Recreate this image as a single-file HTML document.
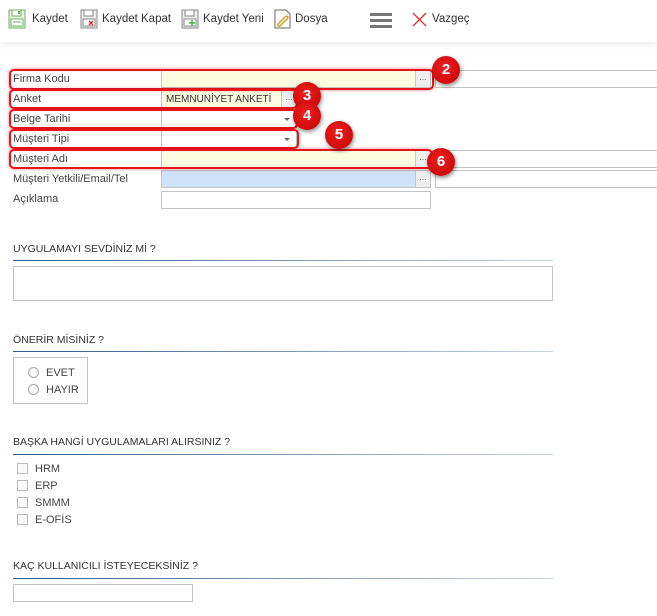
<!DOCTYPE html>
<html><head><meta charset="utf-8"><style>
*{box-sizing:border-box;margin:0;padding:0}
body{width:657px;height:616px;background:#fff;font-family:"Liberation Sans",sans-serif;font-size:11px;color:#333;position:relative;overflow:hidden}
.a{position:absolute}
.tb{left:0;top:0;width:657px;height:42px;background:#fff;box-shadow:0 3px 6px rgba(0,0,0,0.07)}
.tbt{top:13px;font-size:11.5px;color:#333}
.lbl{left:13px;font-size:11px;color:#444}
.inp{border:1px solid #c3c3c3;background:#fff;height:18px}
.btn{border-left:1px solid #c8c8c8;background:#eee;width:15px;height:16px;top:0;right:0;color:#777;font-size:9px;text-align:center;line-height:12px;position:absolute}
.red{border:2px solid #e8141b;border-radius:5px;box-shadow:0 0 3px rgba(200,0,0,0.5)}
.badge{width:28px;height:28px;border-radius:50%;background:radial-gradient(circle at 45% 40%,#f02020,#c00000);color:#fff;font-weight:bold;font-size:15px;text-align:center;line-height:28px;box-shadow:1px 2px 4px rgba(0,0,0,0.45)}
.h{left:13px;font-size:10.5px;color:#333}
.ln{left:13px;width:540px;height:1px;background:linear-gradient(to right,#2e5a84,#c8d4e0)}
.cb{left:17px;width:11px;height:11px;border:1px solid #bbb;background:#fafafa}
.cbl{left:35px;font-size:11px;color:#444}
.rd{left:28px;width:11px;height:11px;border:1px solid #aaa;border-radius:50%;background:#f8f8f8}
.arr{position:absolute;right:6px;top:7px;width:0;height:0;border-left:3px solid transparent;border-right:3px solid transparent;border-top:3px solid #666}
</style></head><body>
<div class="a tb"></div>
<svg class="a" style="left:8px;top:9px" width="18" height="20" viewBox="0 0 18 20"><rect x="1" y="1" width="16" height="18" fill="#e6f3e2" stroke="#6fb069"/><rect x="4" y="1" width="9" height="6" fill="#fff" stroke="#6fb069"/><rect x="10" y="2" width="2" height="3" fill="#6fb069"/><rect x="3" y="10" width="12" height="7" fill="#fff" stroke="#6fb069"/><line x1="5" y1="13" x2="13" y2="13" stroke="#6fb069"/></svg>
<div class="a tbt" style="left:32px">Kaydet</div>
<svg class="a" style="left:80px;top:9px" width="18" height="20" viewBox="0 0 18 20"><rect x="1" y="1" width="16" height="18" fill="#eee" stroke="#888"/><rect x="4" y="1" width="9" height="6" fill="#fff" stroke="#888"/><rect x="3" y="10" width="12" height="7" fill="#fff" stroke="#888"/><path d="M9 12l4 4M13 12l-4 4" stroke="#d22" stroke-width="1.3"/></svg>
<div class="a tbt" style="left:102px">Kaydet Kapat</div>
<svg class="a" style="left:181px;top:9px" width="18" height="20" viewBox="0 0 18 20"><rect x="1" y="1" width="16" height="18" fill="#eee" stroke="#888"/><rect x="4" y="1" width="9" height="6" fill="#fff" stroke="#888"/><rect x="3" y="10" width="12" height="7" fill="#fff" stroke="#888"/><path d="M11 11v6M8 14h6" stroke="#3a3" stroke-width="1.3"/></svg>
<div class="a tbt" style="left:203px">Kaydet Yeni</div>
<svg class="a" style="left:274px;top:9px" width="17" height="20" viewBox="0 0 17 20"><path d="M1 1h11l4 4v14H1z" fill="#fff" stroke="#666"/><path d="M4 15l7-7c2-2 4 0 2 2l-7 7c-1 1-3-1-2-2" fill="none" stroke="#d9a020" stroke-width="1.5"/></svg>
<div class="a tbt" style="left:295px">Dosya</div>
<div class="a" style="left:370px;top:13px;width:22px;height:3px;background:#777"></div>
<div class="a" style="left:370px;top:19px;width:22px;height:3px;background:#777"></div>
<div class="a" style="left:370px;top:25px;width:22px;height:3px;background:#777"></div>
<svg class="a" style="left:412px;top:12px" width="15" height="15"><path d="M1 1l13 13M14 1L1 14" stroke="#e03030" stroke-width="1.3"/></svg>
<div class="a tbt" style="left:432px">Vazgeç</div>

<div class="a lbl" style="top:73px">Firma Kodu</div>
<div class="a inp" style="left:161px;top:70px;width:270px;background:#fbfbe0"><div class="btn">...</div></div>
<div class="a inp" style="left:435px;top:70px;width:230px"></div>

<div class="a lbl" style="top:93px">Anket</div>
<div class="a inp" style="left:161px;top:90px;width:136px;background:#fbfbe0;font-size:10px;padding:3px 4px;color:#333">MEMNUNİYET ANKETİ<div class="btn" style="background:#eee">...</div></div>

<div class="a lbl" style="top:113px">Belge Tarihi</div>
<div class="a inp" style="left:161px;top:110px;width:136px"><div class="arr"></div></div>

<div class="a lbl" style="top:133px">Müşteri Tipi</div>
<div class="a inp" style="left:161px;top:130px;width:136px"><div class="arr"></div></div>

<div class="a lbl" style="top:153px">Müşteri Adı</div>
<div class="a inp" style="left:161px;top:150px;width:270px;background:#fbfbe0"><div class="btn">...</div></div>
<div class="a inp" style="left:435px;top:150px;width:230px"></div>

<div class="a lbl" style="top:173px">Müşteri Yetkili/Email/Tel</div>
<div class="a inp" style="left:161px;top:170px;width:270px;background:#cfe2f8"><div class="btn">...</div></div>
<div class="a inp" style="left:435px;top:170px;width:230px"></div>

<div class="a lbl" style="top:193px">Açıklama</div>
<div class="a inp" style="left:161px;top:191px;width:270px"></div>

<div class="a red" style="left:9px;top:69px;width:425px;height:21px"></div>
<div class="a red" style="left:9px;top:89px;width:289px;height:20px"></div>
<div class="a red" style="left:9px;top:109px;width:289px;height:20px"></div>
<div class="a red" style="left:9px;top:129px;width:290px;height:20px"></div>
<div class="a red" style="left:9px;top:149px;width:424px;height:20px"></div>

<div class="a badge" style="left:432px;top:56px">2</div>
<div class="a badge" style="left:293px;top:82px">3</div>
<div class="a badge" style="left:293px;top:102px">4</div>
<div class="a badge" style="left:325px;top:121px">5</div>
<div class="a badge" style="left:427px;top:148px">6</div>

<div class="a h" style="top:243px">UYGULAMAYI SEVDİNİZ Mİ ?</div>
<div class="a ln" style="top:260px"></div>
<div class="a inp" style="left:13px;top:266px;width:540px;height:35px"></div>

<div class="a h" style="top:334px">ÖNERİR MİSİNİZ ?</div>
<div class="a ln" style="top:351px"></div>
<div class="a inp" style="left:13px;top:357px;width:75px;height:47px"></div>
<div class="a rd" style="top:367px"></div><div class="a cbl" style="left:46px;top:367px">EVET</div>
<div class="a rd" style="top:384px"></div><div class="a cbl" style="left:46px;top:384px">HAYIR</div>

<div class="a h" style="top:436px">BAŞKA HANGİ UYGULAMALARI ALIRSINIZ ?</div>
<div class="a ln" style="top:454px"></div>
<div class="a cb" style="top:463px"></div><div class="a cbl" style="top:463px">HRM</div>
<div class="a cb" style="top:480px"></div><div class="a cbl" style="top:480px">ERP</div>
<div class="a cb" style="top:497px"></div><div class="a cbl" style="top:497px">SMMM</div>
<div class="a cb" style="top:514px"></div><div class="a cbl" style="top:514px">E-OFİS</div>

<div class="a h" style="top:560px">KAÇ KULLANICILI İSTEYECEKSİNİZ ?</div>
<div class="a ln" style="top:578px"></div>
<div class="a inp" style="left:13px;top:584px;width:180px;height:18px"></div>
</body></html>
